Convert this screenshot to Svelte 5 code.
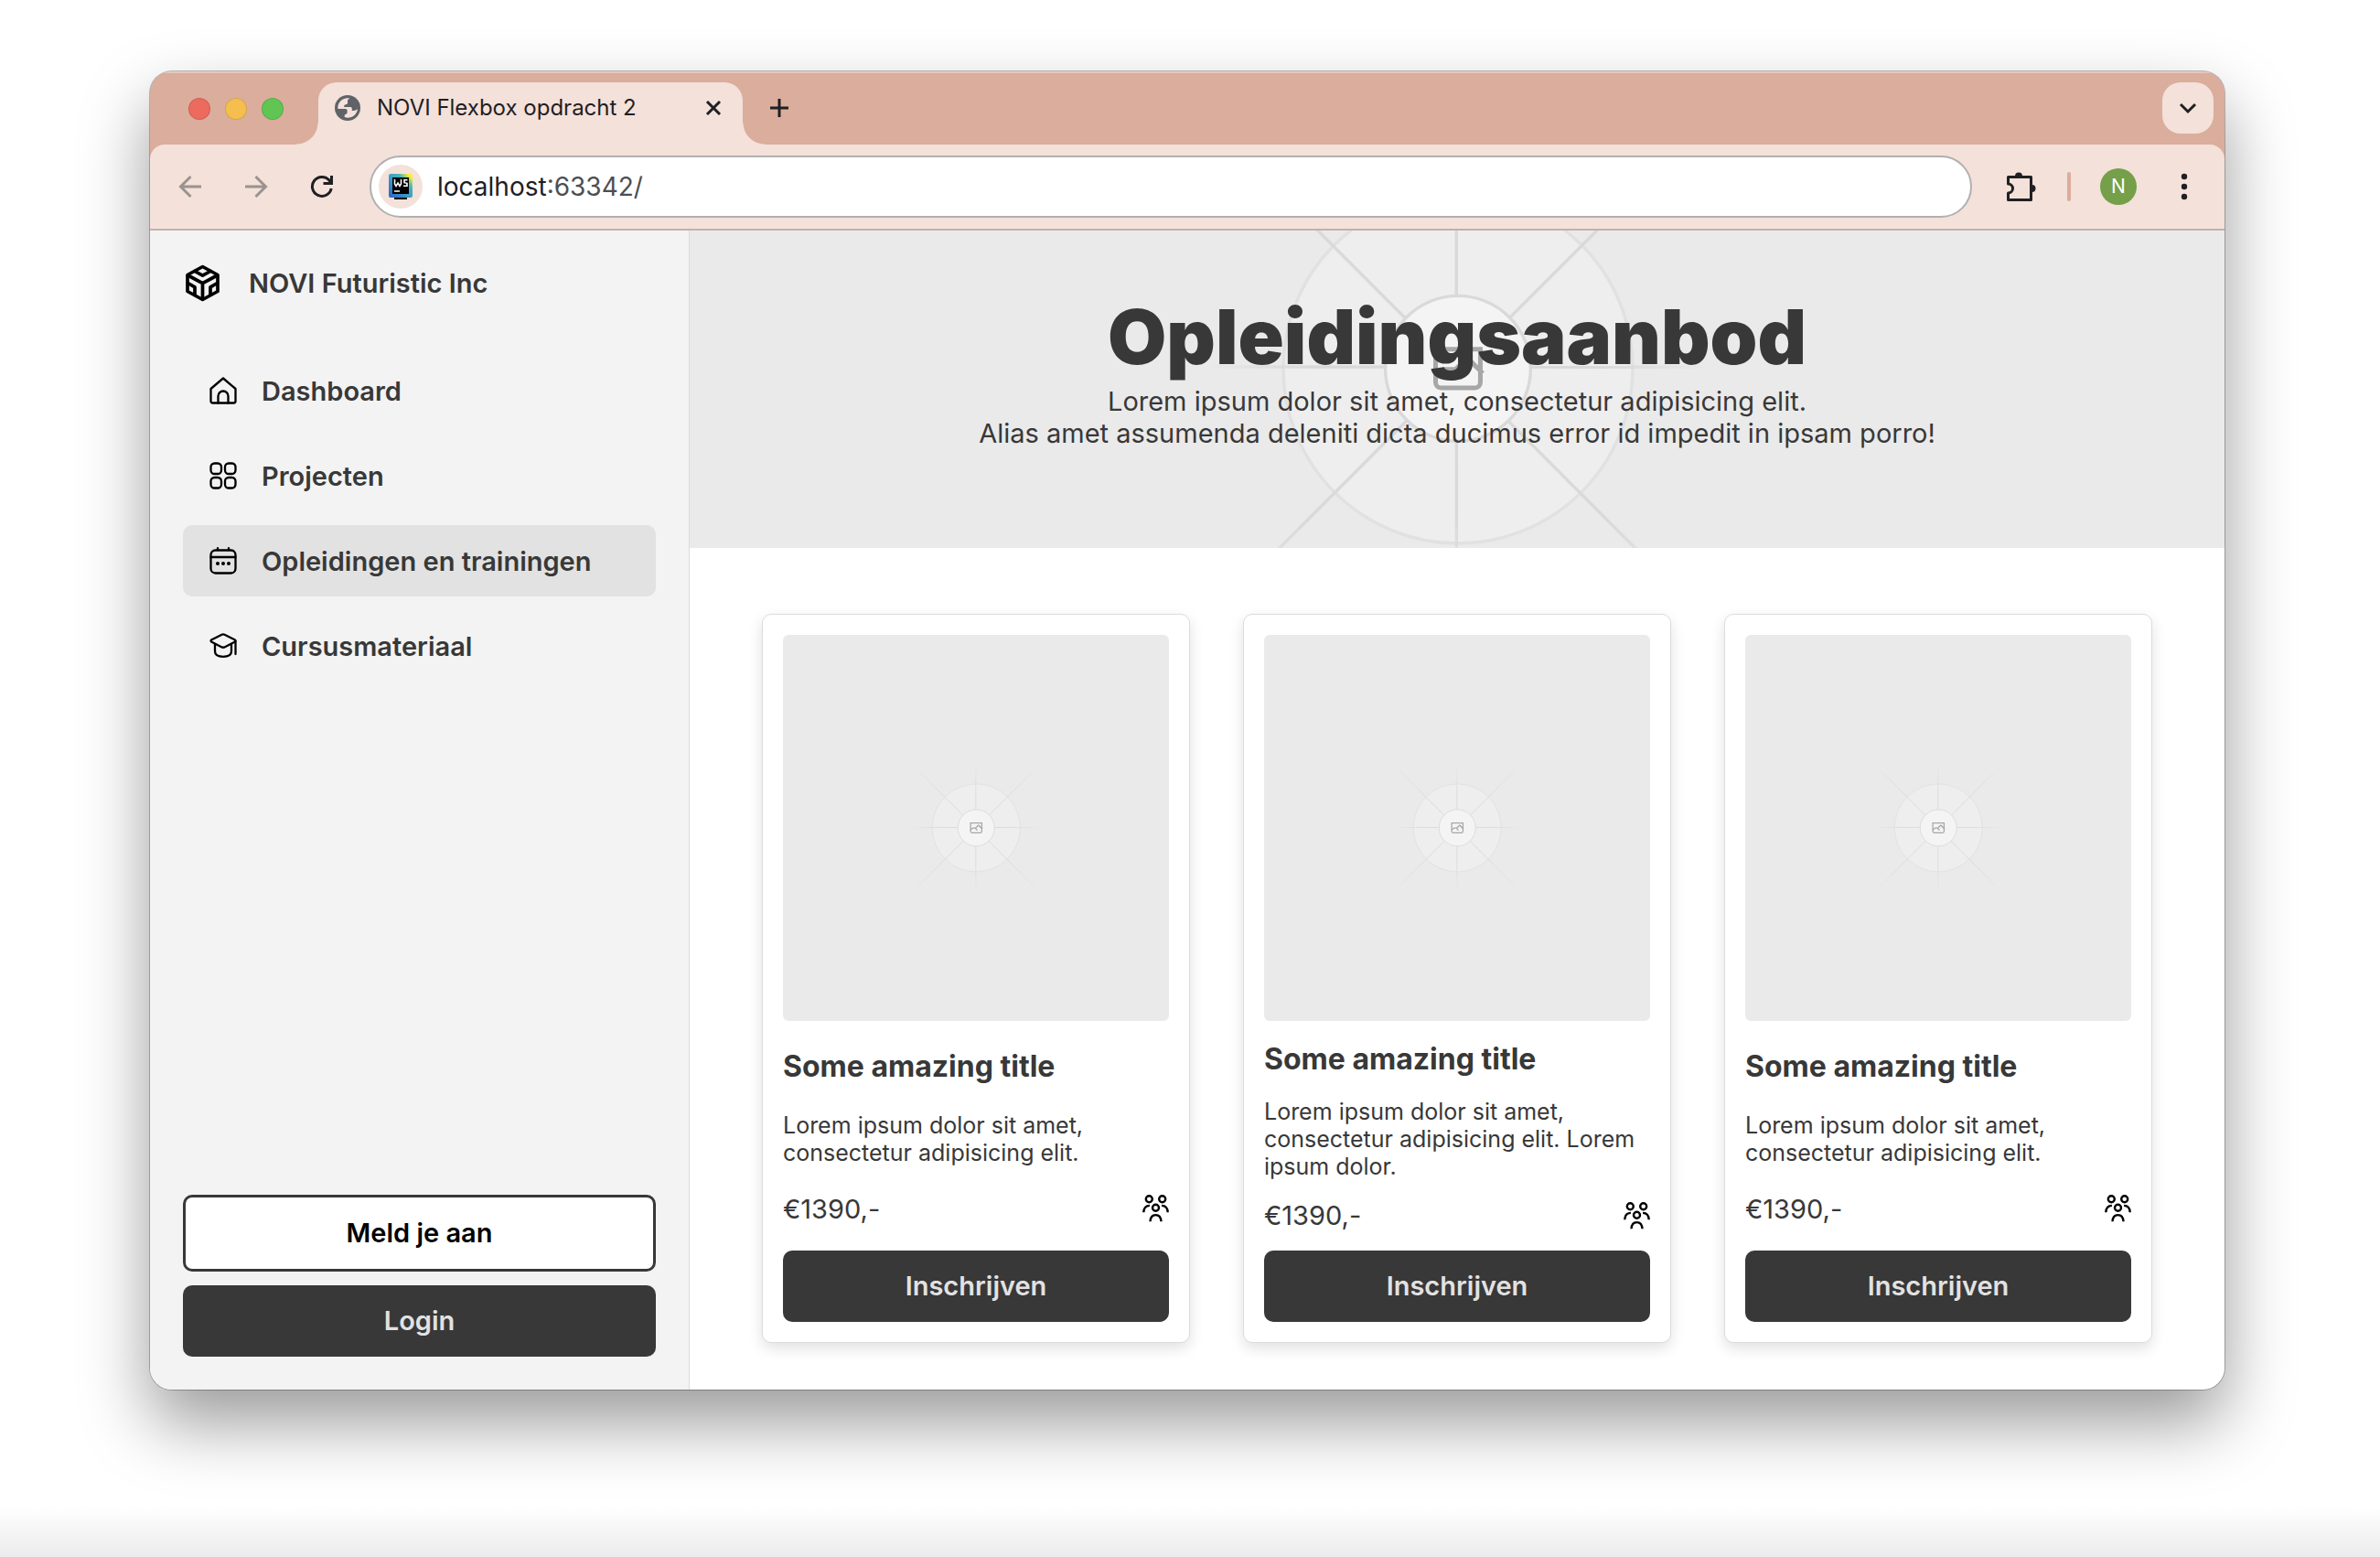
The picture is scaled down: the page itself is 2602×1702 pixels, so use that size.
<script>
  const navItems = [
    { label: 'Dashboard', icon: 'home', active: false },
    { label: 'Projecten', icon: 'grid', active: false },
    { label: 'Opleidingen en trainingen', icon: 'calendar', active: true },
    { label: 'Cursusmateriaal', icon: 'cap', active: false }
  ];

  const courses = [
    { title: 'Some amazing title', text: 'Lorem ipsum dolor sit amet, consectetur adipisicing elit.', price: '€1390,-' },
    { title: 'Some amazing title', text: 'Lorem ipsum dolor sit amet, consectetur adipisicing elit. Lorem ipsum dolor.', price: '€1390,-' },
    { title: 'Some amazing title', text: 'Lorem ipsum dolor sit amet, consectetur adipisicing elit.', price: '€1390,-' }
  ];
</script>

{#snippet placeholder(id)}
  <svg class="placeholder" viewBox="0 0 1200 1200" fill="none" aria-hidden="true">
    <defs>
      <linearGradient id="{id}-a" x1="404" y1="0" x2="796" y2="0" gradientUnits="userSpaceOnUse">
        <stop offset="0" stop-color="#c9c9c9" stop-opacity="0" />
        <stop offset=".21" stop-color="#c9c9c9" />
        <stop offset=".79" stop-color="#c9c9c9" />
        <stop offset="1" stop-color="#c9c9c9" stop-opacity="0" />
      </linearGradient>
      <linearGradient id="{id}-b" x1="0" y1="404" x2="0" y2="796" gradientUnits="userSpaceOnUse">
        <stop offset="0" stop-color="#c9c9c9" stop-opacity="0" />
        <stop offset=".21" stop-color="#c9c9c9" />
        <stop offset=".79" stop-color="#c9c9c9" />
        <stop offset="1" stop-color="#c9c9c9" stop-opacity="0" />
      </linearGradient>
    </defs>
    <g opacity=".5">
      <circle cx="600.7" cy="599.9" r="136.6" fill="#fafafa" stroke="#c9c9c9" stroke-width="2.4" opacity=".5" />
      <g stroke-width="2.4">
        <path stroke="url(#{id}-a)" d="M404.8 796.600 796.300 405" />
        <path stroke="url(#{id}-a)" d="M404.300 405.200 795.700 796.600" />
        <path stroke="url(#{id}-a)" d="M404 598.6 796 598.8" />
        <path stroke="url(#{id}-b)" d="M599.4 404 599.6 796" />
      </g>
      <circle cx="600.7" cy="599.9" r="56.8" fill="#fff" stroke="#c9c9c9" stroke-width="2.4" />
      <path
        fill="#666"
        fill-rule="evenodd"
        d="M616.4 586.6h-31.4v16.2l3.5-3.6.5-.5h9.1l.1-.1 8.5-8.5h2.5l7.2 7.2v-10.7Zm-15.7 14.6 3.7 3.7 1.3 1.3-2.6 2.6-1.3-1.3-5.2-5.2h-6l-5.6 5.5v3a2.4 2.4 0 0 0 2.4 2.4h26.6a2.4 2.4 0 0 0 2.4-2.4v-8.3l-8.5-8.5-7.2 7.2Zm-19.3 5.5v4.1a6 6 0 0 0 6 6h26.6a6 6 0 0 0 6-6v-7.1l1.4-1.4-1.4-1.3v-18h-38.6v23.7Z"
      />
    </g>
  </svg>
{/snippet}

{#snippet navIcon(name)}
  <svg class="nav-icon" viewBox="0 0 30 30" fill="none" stroke="#000" stroke-width="2.3" stroke-linecap="round" stroke-linejoin="round" aria-hidden="true">
    {#if name === 'home'}
      <path d="M1.500 13 15 1.500 28.500 13V26.500a2 2 0 0 1-2 2h-23a2 2 0 0 1-2-2Z" />
      <path d="M9.500 28.500v-7.500a5.500 5.500 0 0 1 11 0v7.500" />
    {:else if name === 'grid'}
      <rect x="1.500" y="1.500" width="11.500" height="11.500" rx="4" />
      <rect x="17" y="1.500" width="11.500" height="11.500" rx="4" />
      <rect x="1.500" y="17" width="11.500" height="11.500" rx="4" />
      <rect x="17" y="17" width="11.500" height="11.500" rx="4" />
    {:else if name === 'calendar'}
      <rect x="1.500" y="3.500" width="27" height="25" rx="5" />
      <path d="M1.500 11h27M9 1.200v2M21 1.200v2" />
      <g fill="#000" stroke="none">
        <circle cx="9" cy="18" r="2" /><circle cx="15" cy="18" r="2" /><circle cx="21" cy="18" r="2" />
      </g>
    {:else}
      <path d="M13.500 2.700 2.500 8.200q-2 1.300 0 2.600l11 5.600q1.500.7 3 0l11-5.600q2-1.300 0-2.600l-11-5.500q-1.500-.7-3 0Z" />
      <path d="M6 13v8q0 5.800 9 5.800t9-5.800v-8M28.500 10v14" />
    {/if}
  </svg>
{/snippet}

<div class="desktop">
  <div class="window">
    <div class="tab-strip">
      <div class="lights">
        <button class="light red" aria-label="Close window"></button>
        <button class="light yellow" aria-label="Minimise window"></button>
        <button class="light green" aria-label="Zoom window"></button>
      </div>
      <div class="tab">
        <svg class="globe" viewBox="0 0 28 28" aria-hidden="true">
          <circle cx="14" cy="14" r="14" fill="#5f6368" />
          <path fill="#f3e1da" d="M16.500 3.400c-1.500.5-2.500 1.600-2.500 3v2c0 1-1 1.600-2 1.800-1.500.3-2 1.200-1.800 2.700l1.300.1h5.500c1 0 1.800.7 1.800 1.700v2.200h2c1.500 0 2.500-.6 3.800-1.600l.3.400c-.9 5-5.200 9-10.600 9-1.300 0-2.500-.3-3.600-.7v-2.500c1.800-.3 2.900-1.200 2.900-2.700V17c0-1-.8-1.900-1.900-1.900H3.400C2.700 8.600 7.700 3.200 14 3.200c.8 0 1.700 0 2.500.2Z" />
        </svg>
        <span class="tab-title">NOVI Flexbox opdracht 2</span>
        <button class="icon-button" aria-label="Close tab">
          <svg width="18" height="18" viewBox="0 0 18 18" fill="none" stroke="#1f2023" stroke-width="3"><path d="m2 2 14 14M16 2 2 16" /></svg>
        </button>
      </div>
      <button class="icon-button new-tab" aria-label="New tab">
        <svg width="20" height="20" viewBox="0 0 20 20" fill="none" stroke="#1f2023" stroke-width="3"><path d="M10 0v20M0 10h20" /></svg>
      </button>
      <button class="tab-search" aria-label="Search tabs">
        <svg width="20" height="14" viewBox="0 0 20 14" fill="none" stroke="#1f2023" stroke-width="3"><path d="m2 3 8 8 8-8" /></svg>
      </button>
    </div>

    <div class="toolbar">
      <div class="history">
        <button class="icon-button" aria-label="Back">
          <svg width="26" height="26" viewBox="0 0 26 26" fill="none" stroke="#9c9290" stroke-width="3"><path d="M25 13H3M13.500 2 2.500 13l11 11" /></svg>
        </button>
        <button class="icon-button" aria-label="Forward">
          <svg width="26" height="26" viewBox="0 0 26 26" fill="none" stroke="#9c9290" stroke-width="3"><path d="M1 13h22M12.500 2l11 11-11 11" /></svg>
        </button>
        <button class="icon-button" aria-label="Reload">
          <svg width="26" height="26" viewBox="0 0 26 26" fill="none" stroke="#1f2023" stroke-width="3"><path d="M23.200 15A10.500 10.500 0 1 1 21 6.200M23.500 1v8.500h-9M23 8.500l-3-3.500" /></svg>
        </button>
      </div>
      <div class="address">
        <span class="site-icon">
          <svg width="26" height="28" viewBox="0 0 26 28" aria-hidden="true">
            <defs>
              <linearGradient id="ws" x1="0" y1="1" x2="1" y2="0">
                <stop offset="0" stop-color="#2b63c9" /><stop offset=".45" stop-color="#3d9bc6" /><stop offset=".7" stop-color="#4cb5b8" /><stop offset=".9" stop-color="#fcee39" />
              </linearGradient>
            </defs>
            <rect width="26" height="26" rx="2" fill="url(#ws)" />
            <rect x="4" y="4" width="18" height="18" />
            <path d="M6.500 6v5l1.500 2.500L10 10l2 3.500 1.500-2.500V6M20.500 6.700h-3.500v3l3 .6v3h-4M6 19h6" fill="none" stroke="#fff" stroke-width="1.600" />
            <path d="M6 26h14v2H6Z" />
          </svg>
        </span>
        <label class="url-label">
          <span class="host">localhost</span><input class="url" aria-label="Address" value=":63342/" />
        </label>
      </div>
      <div class="actions">
        <button class="icon-button" aria-label="Extensions">
          <svg width="34" height="34" viewBox="0 0 34 34" fill="none" stroke="#1f2023" stroke-width="3" stroke-linejoin="round">
            <path d="M3.500 6.500h25v25h-25v-7.500a5 5 0 0 0 0-10Z" />
            <path d="M11 5.500a4 4 0 0 1 8 0ZM29.500 15a4 4 0 0 1 0 8Z" fill="#1f2023" stroke="none" />
          </svg>
        </button>
        <span class="divider"></span>
        <button class="avatar" aria-label="Profile">N</button>
        <button class="icon-button" aria-label="Menu">
          <svg width="8" height="30" viewBox="0 0 8 30" fill="#1f2023"><circle cx="4" cy="4" r="3.200" /><circle cx="4" cy="15" r="3.200" /><circle cx="4" cy="26" r="3.200" /></svg>
        </button>
      </div>
    </div>

    <div class="page">
      <aside class="sidebar">
        <a class="brand" href="#home">
          <svg width="43" height="43" viewBox="0 0 43 43" fill="none" stroke="#000" stroke-width="3.700" stroke-linecap="round" stroke-linejoin="round" aria-hidden="true">
            <path d="m21.500 3.500 16.500 9v18l-16.500 9-16.500-9v-18Z" />
            <path d="m5.500 13 16 8.700 16-8.700M21.500 22v17M13 8.500l8.500 4.700L30 8.500M5.500 21.500l7.500 4.300v8.700M37.500 21.500 30 25.800v8.700" />
          </svg>
          <span>NOVI Futuristic Inc</span>
        </a>
        <nav>
          <ul>
            {#each navItems as item}
              <li>
                <a class="nav-link" class:active={item.active} href="#{item.icon}">
                  {@render navIcon(item.icon)}
                  <span>{item.label}</span>
                </a>
              </li>
            {/each}
          </ul>
        </nav>
        <div class="auth">
          <button class="btn outline">Meld je aan</button>
          <button class="btn solid">Login</button>
        </div>
      </aside>

      <main>
        <header class="hero">
          {@render placeholder('hero')}
          <h1>Opleidingsaanbod</h1>
          <p>Lorem ipsum dolor sit amet, consectetur adipisicing elit.<br />Alias amet assumenda deleniti dicta ducimus error id impedit in ipsam porro!</p>
        </header>
        <section class="courses">
          {#each courses as course, i}
            <article class="card">
              <div class="picture">{@render placeholder('card' + i)}</div>
              <h2>{course.title}</h2>
              <p class="text">{course.text}</p>
              <div class="meta">
                <span>{course.price}</span>
                <svg width="29" height="30" viewBox="0 0 29 30" fill="none" stroke="#000" stroke-width="2.400" aria-hidden="true">
                  <circle cx="7.300" cy="4.800" r="3.500" />
                  <circle cx="21.700" cy="4.800" r="3.500" />
                  <circle cx="14.500" cy="14.300" r="3.500" />
                  <path d="M1.300 19.300q.3-7.300 6.600-7.400M27.700 19.300q-.3-7.300-6.600-7.400M8.500 29.300q.4-7.200 6-7.200t6 7.200" />
                </svg>
              </div>
              <button class="btn solid">Inschrijven</button>
            </article>
          {/each}
        </section>
      </main>
    </div>
  </div>
</div>

<style>
  :global(body) {
    background: #fff;
  }

  .desktop,
  .desktop * {
    box-sizing: border-box;
  }

  .desktop {
    min-height: 100vh;
    padding: 78px 170px 184px 164px;
    background: linear-gradient(to top, #ebebeb, #fff 56px);
    font-family: Inter, 'Liberation Sans', sans-serif;
    font-size: 29px;
    line-height: 35px;
    color: #383838;
  }

  h1,
  h2,
  p,
  ul {
    margin: 0;
    padding: 0;
  }

  ul {
    list-style: none;
  }

  a {
    color: inherit;
    text-decoration: none;
  }

  button {
    font: inherit;
    border: 0;
    padding: 0;
    cursor: pointer;
  }

  svg {
    display: block;
    flex: none;
  }

  .window {
    border-radius: 24px;
    background: #dbad9c;
    box-shadow:
      0 0 0 1px rgb(0 0 0 / 25%),
      0 36px 76px rgb(0 0 0 / 40%);
    overflow: hidden;
  }

  /* Browser chrome */
  .tab-strip {
    display: flex;
    align-items: flex-start;
    height: 80px;
    padding: 10px 12px 0 42px;
    border-top: 2px solid #e5c9be;
  }

  .lights {
    display: flex;
    gap: 16px;
    margin: 17px 38px 0 0;
  }

  .light {
    width: 24px;
    height: 24px;
    border: 1px solid rgb(0 0 0 / 12%);
    border-radius: 50%;
  }

  .red {
    background: #ed6a5e;
  }

  .yellow {
    background: #f5bf4f;
  }

  .green {
    background: #61c554;
  }

  .tab {
    position: relative;
    display: flex;
    align-items: center;
    gap: 18px;
    width: 464px;
    height: 68px;
    padding: 0 23px 12px 18px;
    border-radius: 20px 20px 0 0;
    background: #f3e1da;
    color: #1f2023;
    font-size: 24px;
    line-height: 30px;
  }

  .tab::before,
  .tab::after {
    content: '';
    position: absolute;
    bottom: 0;
    width: 24px;
    height: 24px;
  }

  .tab::before {
    right: 100%;
    background: radial-gradient(circle at 0 0, transparent 23px, #f3e1da 24px);
  }

  .tab::after {
    left: 100%;
    background: radial-gradient(circle at 100% 0, transparent 23px, #f3e1da 24px);
  }

  .globe {
    width: 28px;
    height: 28px;
  }

  .tab-title {
    flex: 1;
    white-space: nowrap;
  }

  .icon-button {
    display: grid;
    place-items: center;
    background: none;
  }

  .new-tab {
    margin: 18px 0 0 30px;
  }

  .tab-search {
    display: grid;
    place-items: center;
    width: 56px;
    height: 56px;
    margin-left: auto;
    border-radius: 20px;
    background: #f3e1da;
  }

  .toolbar {
    display: flex;
    align-items: center;
    height: 94px;
    padding: 0 40px 0 31px;
    border-bottom: 2px solid #c2b1ad;
    border-radius: 16px 16px 0 0;
    background: #f3e1da;
  }

  .history {
    display: flex;
    gap: 46px;
    margin-right: 39px;
  }

  .address {
    flex: 1;
    display: flex;
    align-items: center;
    gap: 16px;
    height: 68px;
    padding: 0 8px;
    border: 2px solid #b0b0b1;
    border-radius: 34px;
    background: #fff;
    font-size: 28px;
  }

  .site-icon {
    display: grid;
    place-items: center;
    width: 48px;
    height: 48px;
    border-radius: 50%;
    background: #f3e1da;
  }

  .url-label {
    flex: 1;
    display: flex;
  }

  .host {
    color: #1f2023;
  }

  .url {
    flex: 1;
    min-width: 0;
    padding: 0;
    border: 0;
    background: none;
    color: #4d4e51;
    font: inherit;
  }

  .actions {
    display: flex;
    align-items: center;
    margin-left: 36px;
  }

  .divider {
    width: 4px;
    height: 32px;
    margin: 0 32px 0 34px;
    border-radius: 2px;
    background: #dbad9c;
  }

  .avatar {
    width: 40px;
    height: 40px;
    margin-right: 48px;
    border-radius: 50%;
    background: #759f48;
    color: #fff;
    font-size: 21px;
    line-height: 40px;
    text-align: center;
  }

  /* Page */
  .page {
    display: flex;
    background: #fff;
  }

  .sidebar {
    display: flex;
    flex-direction: column;
    width: 590px;
    padding: 36px;
    border-right: 1px solid #dcdcdc;
    background: #f3f3f3;
    font-weight: 600;
  }

  .brand {
    display: flex;
    align-items: center;
    gap: 29px;
    margin-bottom: 57px;
  }

  nav ul {
    display: flex;
    flex-direction: column;
    gap: 15px;
  }

  .nav-link {
    display: flex;
    align-items: center;
    gap: 27px;
    height: 78px;
    padding: 0 29px;
    border-radius: 10px;
  }

  .active {
    background: #e2e2e2;
  }

  .nav-icon {
    width: 30px;
    height: 30px;
  }

  .auth {
    display: flex;
    flex-direction: column;
    gap: 15px;
    margin-top: auto;
  }

  .btn {
    width: 100%;
    padding: 21px;
    border-radius: 10px;
    font-weight: 600;
    line-height: 36px;
  }

  .solid {
    background: #383838;
    color: #e2e2e2;
  }

  .outline {
    border: 3px solid #383838;
    background: #fff;
    color: #000;
  }

  main {
    flex: 1;
    min-width: 0;
  }

  .hero {
    position: relative;
    padding: 64px 40px 108px;
    overflow: hidden;
    background: #eaeaea;
    text-align: center;
  }

  .hero :global(.placeholder) {
    position: absolute;
    top: 151px;
    left: 0;
    width: 100%;
    transform: translateY(-50%);
  }

  .hero h1,
  .hero p {
    position: relative;
  }

  h1 {
    font-size: 83px;
    line-height: 105px;
    font-weight: 900;
  }

  .courses {
    display: grid;
    grid-template-columns: repeat(3, 1fr);
    gap: 58px;
    padding: 72px 79px 51px;
  }

  .card {
    display: flex;
    flex-direction: column;
    justify-content: space-between;
    gap: 21px;
    padding: 22px;
    border: 1px solid #dcdcdc;
    border-radius: 10px;
    background: #fff;
    box-shadow: 0 6px 16px rgb(0 0 0 / 12%);
  }

  .picture {
    border-radius: 6px;
    background: #eaeaea;
  }

  h2 {
    font-size: 32px;
    line-height: 42px;
    font-weight: 700;
  }

  .text {
    font-size: 25px;
    line-height: 30px;
  }

  .meta {
    display: flex;
    align-items: center;
    justify-content: space-between;
  }
</style>
